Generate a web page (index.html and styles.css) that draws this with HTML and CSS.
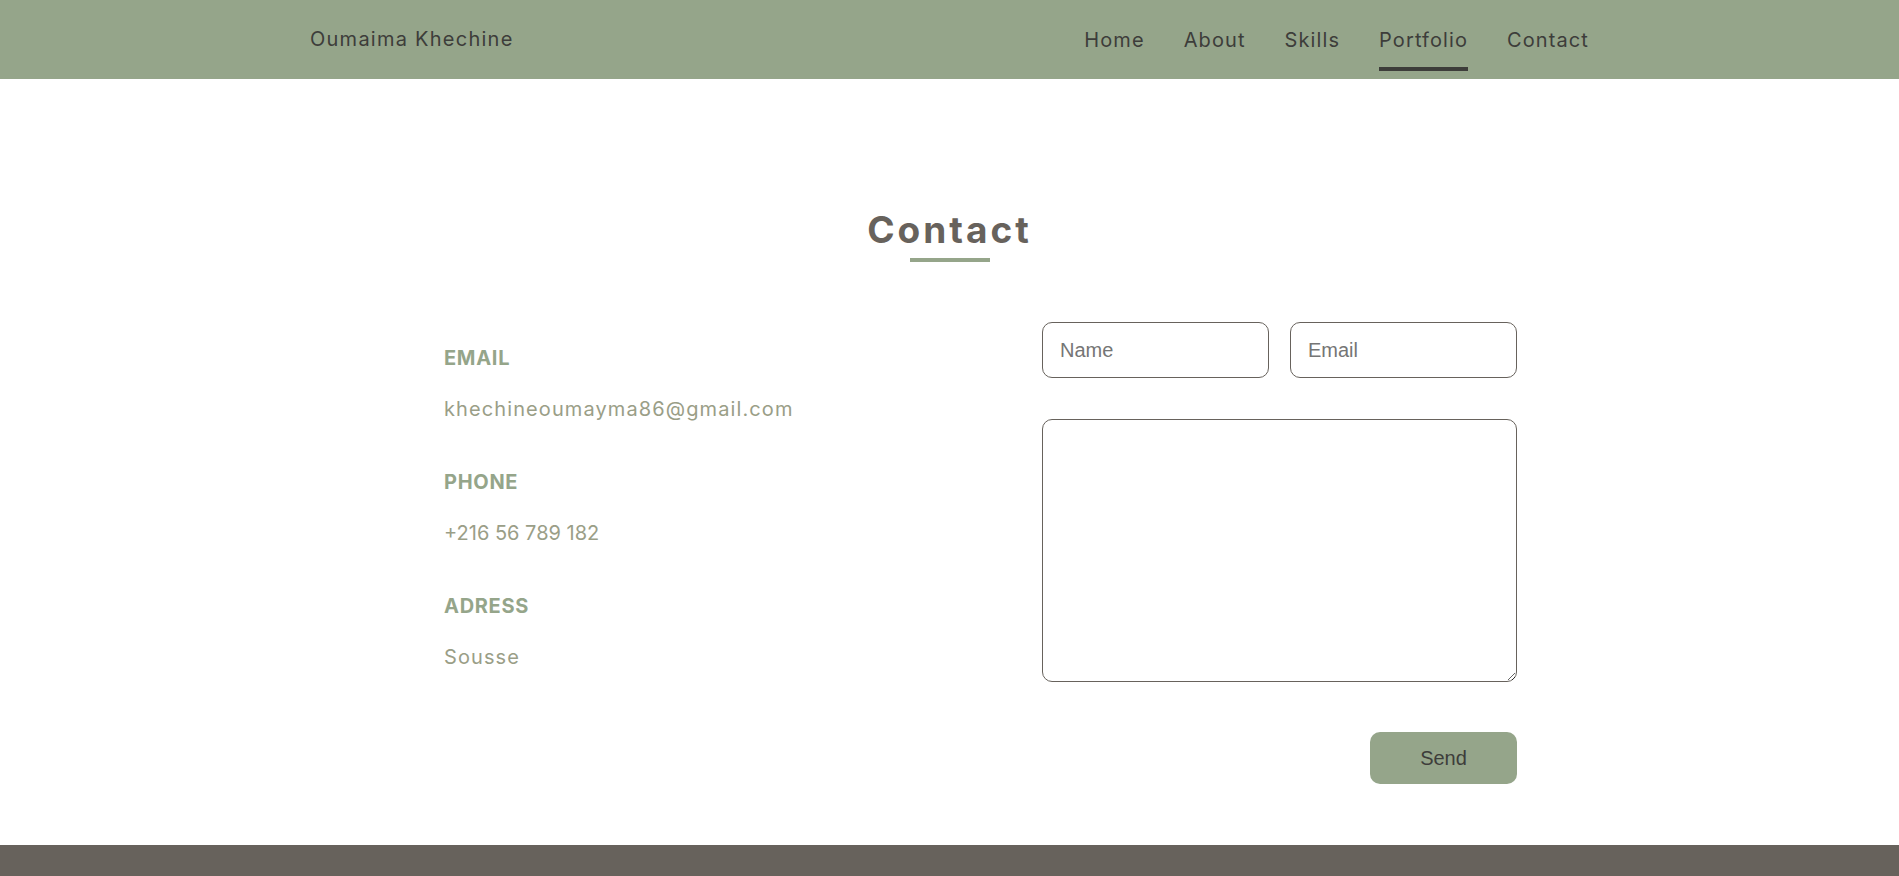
FILE: index.html
```html
<!DOCTYPE html>
<html lang="en">
<head>
<meta charset="utf-8">
<title>Oumaima Khechine - Contact</title>
<link rel="stylesheet" href="styles.css">
</head>
<body>
<header class="site-header">
  <div class="header-inner">
    <a class="logo" href="#">Oumaima Khechine</a>
    <nav class="nav">
      <a class="nav-link" href="#">Home</a>
      <a class="nav-link" href="#">About</a>
      <a class="nav-link" href="#">Skills</a>
      <a class="nav-link active" href="#">Portfolio</a>
      <a class="nav-link" href="#">Contact</a>
    </nav>
  </div>
</header>

<main class="contact">
  <h2 class="section-title">Contact</h2>
  <div class="title-bar"></div>
  <div class="contact-body">
    <div class="info">
      <div class="info-item">
        <h3 class="info-label">EMAIL</h3>
        <p class="info-value">khechineoumayma86@gmail.com</p>
      </div>
      <div class="info-item">
        <h3 class="info-label">PHONE</h3>
        <p class="info-value info-number">+216 56 789 182</p>
      </div>
      <div class="info-item">
        <h3 class="info-label">ADRESS</h3>
        <p class="info-value">Sousse</p>
      </div>
    </div>
    <form class="form">
      <div class="form-row">
        <input class="field" type="text" placeholder="Name">
        <input class="field" type="email" placeholder="Email">
      </div>
      <textarea class="message"></textarea>
      <div class="form-actions">
        <button class="send" type="button">Send</button>
      </div>
    </form>
  </div>
</main>

<footer class="site-footer"></footer>
</body>
</html>
```
FILE: styles.css
```css
* { box-sizing: border-box; }

html, body {
  margin: 0;
  padding: 0;
  background: #ffffff;
}

body {
  font-family: Inter, "Open Sans", sans-serif;
}

.site-header {
  background: #95a58a;
  height: 79px;
}

.header-inner {
  width: 1279px;
  margin: 0 auto;
  height: 100%;
  display: flex;
  align-items: center;
  justify-content: space-between;
}

.logo {
  color: #3d3d3a;
  text-decoration: none;
  font-size: 20px;
  letter-spacing: 1.25px;
  margin-top: -1px;
}

.nav {
  display: flex;
  gap: 39px;
  height: 100%;
  align-items: center;
}

.nav-link {
  position: relative;
  color: #3d3d3a;
  text-decoration: none;
  font-size: 20px;
  letter-spacing: 1.1px;
  margin-top: 1px;
}

.nav-link.active::after {
  content: "";
  position: absolute;
  left: 0;
  right: 0;
  top: 39px;
  height: 4px;
  background: #3d3d3a;
}

.contact {
  padding: 129px 0 61px;
}

.section-title {
  margin: 0;
  text-align: center;
  font-size: 37px;
  line-height: 44px;
  font-weight: 700;
  color: #67625c;
  letter-spacing: 3px;
}

.title-bar {
  width: 80px;
  height: 4px;
  background: #95a58a;
  margin: 6px auto 0;
}

.contact-body {
  width: 1073px;
  margin-left: calc(50% - 505.5px);
  margin-top: 60px;
  display: grid;
  grid-template-columns: 598px 475px;
}

.info {
  padding-top: 24px;
}

.info-item {
  margin-bottom: 49px;
}

.info-label {
  margin: 0 0 27px;
  font-size: 20px;
  line-height: 24px;
  font-weight: 700;
  color: #95a58a;
  letter-spacing: 0.7px;
}

.info-value {
  margin: 0;
  font-size: 20px;
  line-height: 24px;
  color: #9a9e87;
  letter-spacing: 1.1px;
}

.info-number {
  letter-spacing: 0;
}

.form {
  display: flex;
  flex-direction: column;
}

.form-row {
  display: flex;
  gap: 21px;
}

.field {
  flex: 1;
  min-width: 0;
  height: 56px;
  border: 1px solid #67625c;
  border-radius: 10px;
  padding: 0 17px;
  font-family: "Liberation Sans", Arial, sans-serif;
  font-size: 20px;
  color: #333;
  background: #fff;
}

.field::placeholder {
  color: #757575;
}

.message {
  margin-top: 41px;
  height: 263px;
  width: 100%;
  border: 1px solid #67625c;
  border-radius: 10px;
  padding: 14px 17px;
  font-family: "Liberation Sans", Arial, sans-serif;
  font-size: 20px;
  background: #fff;
}

.form-actions {
  display: flex;
  justify-content: flex-end;
  margin-top: 50px;
}

.send {
  width: 147px;
  height: 52px;
  border: none;
  border-radius: 10px;
  background: #95a58a;
  color: #3d3d3a;
  font-family: "Liberation Sans", Arial, sans-serif;
  font-size: 20px;
  cursor: pointer;
}

.site-footer {
  background: #67625c;
  height: 80px;
}
```
